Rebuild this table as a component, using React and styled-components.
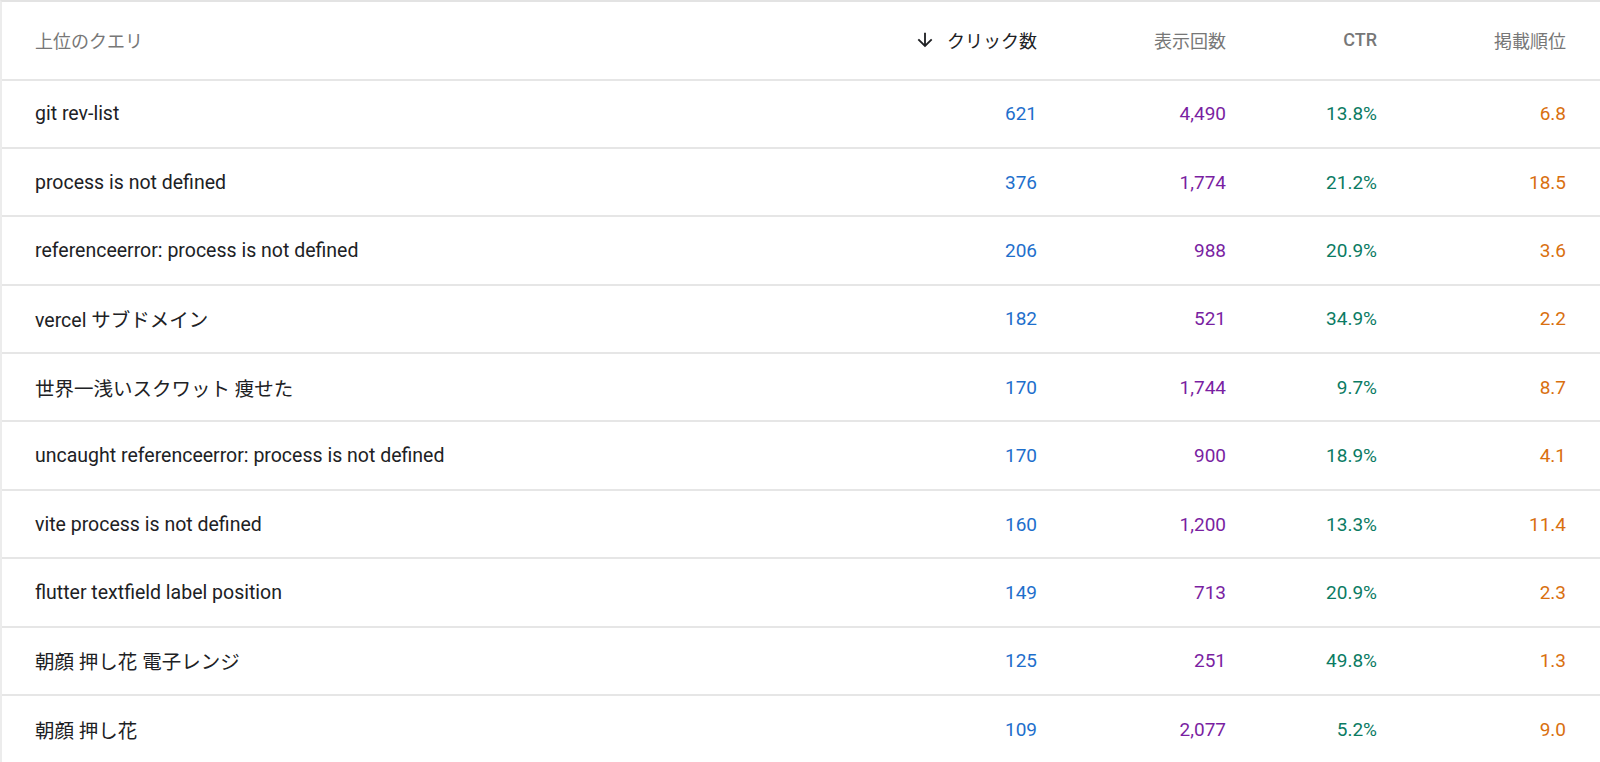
import React from "react";
import styled, { createGlobalStyle } from "styled-components";

const GlobalStyle = createGlobalStyle`
  html, body {
    margin: 0;
    padding: 0;
    background: #fff;
  }
  body {
    font-family: Roboto, "Noto Sans CJK JP", sans-serif;
    -webkit-font-smoothing: antialiased;
  }
`;

const Card = styled.div`
  border-top: 2px solid #e3e3e3;
  border-left: 2px solid #ececec;
  background: #fff;
  min-height: 762px;
  box-sizing: border-box;
`;

const Row = styled.div`
  display: grid;
  grid-template-columns: 1fr 189px 189px 151px 189px;
  align-items: center;
  height: ${(p) => (p.$head ? "75.5px" : "66.4px")};
  padding: ${(p) => (p.$head ? "0 34px 1px 33px" : "0 34px 0 33px")};
  box-sizing: content-box;
  border-bottom: 2px solid #e6e6e6;
`;

const HeadCell = styled.div`
  font-size: 18px;
  color: ${(p) => (p.$active ? "#202124" : "#777")};
  font-weight: ${(p) => (p.$bold ? 500 : 400)};
  display: flex;
  align-items: center;
  justify-content: ${(p) => (p.$left ? "flex-start" : "flex-end")};
  gap: 11px;
  white-space: nowrap;
`;

const Query = styled.div`
  font-size: 19.5px;
  color: #202124;
  white-space: nowrap;
`;

const Num = styled.div`
  font-size: 19px;
  text-align: right;
  color: ${(p) => p.$color};
`;

const COLORS = {
  clicks: "#1e6fcc",
  impressions: "#7a1fa2",
  ctr: "#0b7b63",
  position: "#d9700f",
};

const rows = [
  ["git rev-list", "621", "4,490", "13.8%", "6.8"],
  ["process is not defined", "376", "1,774", "21.2%", "18.5"],
  ["referenceerror: process is not defined", "206", "988", "20.9%", "3.6"],
  ["vercel サブドメイン", "182", "521", "34.9%", "2.2"],
  ["世界一浅いスクワット 痩せた", "170", "1,744", "9.7%", "8.7"],
  ["uncaught referenceerror: process is not defined", "170", "900", "18.9%", "4.1"],
  ["vite process is not defined", "160", "1,200", "13.3%", "11.4"],
  ["flutter textfield label position", "149", "713", "20.9%", "2.3"],
  ["朝顔 押し花 電子レンジ", "125", "251", "49.8%", "1.3"],
  ["朝顔 押し花", "109", "2,077", "5.2%", "9.0"],
];

function ArrowDown() {
  return (
    <svg width="22" height="22" viewBox="0 0 24 24" fill="#202124">
      <path d="M20 12l-1.41-1.41L13 16.17V4h-2v12.17l-5.58-5.59L4 12l8 8 8-8z" />
    </svg>
  );
}

export default function App() {
  return (
    <>
      <GlobalStyle />
      <Card>
        <Row $head>
          <HeadCell $left>上位のクエリ</HeadCell>
          <HeadCell $active>
            <ArrowDown />
            クリック数
          </HeadCell>
          <HeadCell>表示回数</HeadCell>
          <HeadCell $bold>CTR</HeadCell>
          <HeadCell>掲載順位</HeadCell>
        </Row>
        {rows.map(([q, c, i, ctr, pos]) => (
          <Row key={q}>
            <Query>{q}</Query>
            <Num $color={COLORS.clicks}>{c}</Num>
            <Num $color={COLORS.impressions}>{i}</Num>
            <Num $color={COLORS.ctr}>{ctr}</Num>
            <Num $color={COLORS.position}>{pos}</Num>
          </Row>
        ))}
      </Card>
    </>
  );
}
